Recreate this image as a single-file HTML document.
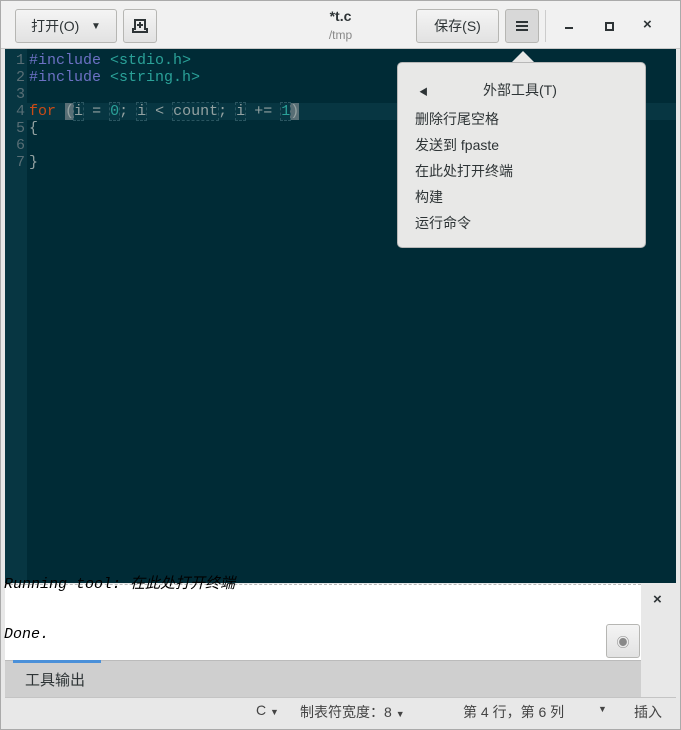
<!DOCTYPE html><html><head><meta charset="utf-8"><style>
body{margin:0;width:681px;height:730px;background:#e8e8e8;font-family:"Liberation Sans","Noto Sans CJK SC",sans-serif;position:relative;overflow:hidden;font-size:14px;color:#2e3436}
.a{position:absolute}
.btn{position:absolute;background:linear-gradient(#f4f4f4,#e2e2e2);border:1px solid #b6b6b3;border-radius:3px;box-sizing:border-box;display:flex;align-items:center;justify-content:center}
.code{font-family:"Liberation Mono","DejaVu Sans Mono",monospace;font-size:15px;line-height:17px;white-space:pre}
.ln{color:#586e75;text-align:right}
.mi{font-size:14px;color:#2e3436;position:absolute;left:415px}
.o{outline:1px dashed #2a5560;outline-offset:0}
</style></head><body>
<div class="a" style="left:0;top:0;width:681px;height:730px;border:1px solid #aaa;box-sizing:border-box"></div>
<div class="a" style="left:1px;top:1px;width:679px;height:47px;background:#f1f1f1;border-bottom:1px solid #c8c8c8"></div>
<div class="btn" style="left:15px;top:9px;width:102px;height:34px">打开(O)&nbsp;&nbsp;&nbsp;<span style="font-size:10px">▼</span></div>
<div class="btn" style="left:123px;top:9px;width:34px;height:34px"><svg width="16" height="16" viewBox="0 0 16 16"><path d="M3 2h10v9h2v3H1v-3h2z" fill="none" stroke="#2e3436" stroke-width="2"/><path d="M8 4v6M5 7h6" stroke="#2e3436" stroke-width="2"/></svg></div>
<div class="a" style="left:0;width:681px;top:8px;text-align:center;font-weight:bold;font-size:14px">*t.c</div>
<div class="a" style="left:0;width:681px;top:28px;text-align:center;font-size:12px;color:#888">/tmp</div>
<div class="btn" style="left:416px;top:9px;width:83px;height:34px">保存(S)</div>
<div class="btn" style="left:505px;top:9px;width:34px;height:34px;background:#d8d8d8"><svg width="12" height="10"><path d="M0 1h12M0 5h12M0 9h12" stroke="#2e3436" stroke-width="2"/></svg></div>
<div class="a" style="left:545px;top:10px;width:1px;height:32px;background:#ccc"></div>
<div class="a" style="left:565px;top:27px;width:8px;height:2px;background:#2e3436"></div>
<div class="a" style="left:605px;top:22px;width:5px;height:5px;border:2px solid #2e3436"></div>
<div class="a" style="left:643px;top:16px;font-weight:bold;font-size:15px">×</div>
<div class="a" style="left:5px;top:49px;width:671px;height:534px;background:#002b36"></div>
<div class="a" style="left:5px;top:49px;width:22px;height:534px;background:#073642"></div>
<div class="a" style="left:27px;top:103px;width:649px;height:17px;background:#073642"></div>
<div class="a code ln" style="left:5px;top:52px;width:20px">1
2
3
4
5
6
7</div>
<div class="a code" style="left:29px;top:52px;color:#93a1a1"><span style="color:#6c71c4">#include</span> <span style="color:#2aa198">&lt;stdio.h&gt;</span>
<span style="color:#6c71c4">#include</span> <span style="color:#2aa198">&lt;string.h&gt;</span>

<span style="color:#cb4b16">for</span> <span style="background:#586e75">(</span><span class="o">i</span> = <span class="o" style="color:#2aa198">0</span>; <span class="o">i</span> &lt; <span class="o">count</span>; <span class="o">i</span> += <span class="o" style="color:#2aa198">1</span><span style="background:#586e75">)</span>
{

}</div>
<div class="a" style="left:397px;top:62px;width:249px;height:186px;background:#e8e8e7;border:1px solid #b8b8b8;border-radius:5px;box-sizing:border-box"></div>
<div class="a" style="left:512px;top:51px;width:0;height:0;border:11px solid transparent;border-bottom-color:#e8e8e7;border-top:0"></div>
<div class="a" style="left:419px;top:85px;font-size:9px">◀</div>
<div class="mi" style="left:483px;top:80px">外部工具(T)</div>
<div class="mi" style="top:109px">删除行尾空格</div>
<div class="mi" style="top:135px">发送到 fpaste</div>
<div class="mi" style="top:161px">在此处打开终端</div>
<div class="mi" style="top:187px">构建</div>
<div class="mi" style="top:213px">运行命令</div>
<div class="a" style="left:5px;top:584px;width:636px;height:76px;background:#fff;border-top:1px dashed #bbb;overflow:hidden"></div>
<div class="a code" style="left:4px;top:576px;font-style:italic;color:#000">Running tool: 在此处打开终端</div>
<div class="a code" style="left:4px;top:626px;font-style:italic;color:#000">Done.</div>
<div class="btn" style="left:606px;top:624px;width:34px;height:34px;color:#888;font-size:13px">◉</div>
<div class="a" style="left:5px;top:660px;width:636px;height:37px;background:#cfcfcf;border-top:1px solid #bbb"></div>
<div class="a" style="left:13px;top:660px;width:88px;height:3px;background:#4a90d9"></div>
<div class="a" style="left:25px;top:669px;font-size:15px">工具输出</div>
<div class="a" style="left:653px;top:591px;font-weight:bold;font-size:15px">×</div>
<div class="a" style="left:5px;top:697px;width:671px;height:1px;background:#c4c4c4"></div>
<div class="a" style="left:256px;top:702px;color:#444">C <span style="font-size:9px">▼</span></div>
<div class="a" style="left:300px;top:702px;color:#444">制表符宽度：8 <span style="font-size:9px">▼</span></div>
<div class="a" style="left:463px;top:702px;color:#444">第 4 行，第 6 列</div>
<div class="a" style="left:598px;top:704px;color:#444;font-size:9px">▼</div>
<div class="a" style="left:634px;top:702px;color:#444">插入</div>
</body></html>
